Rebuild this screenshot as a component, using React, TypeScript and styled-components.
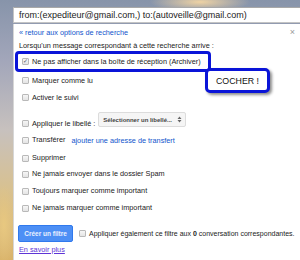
import styled, { createGlobalStyle } from "styled-components";

const GlobalStyle = createGlobalStyle`
  html, body {
    margin: 0;
    padding: 0;
    width: 300px;
    height: 260px;
    overflow: hidden;
  }
  body {
    font-family: "Liberation Sans", Arial, sans-serif;
  }
`;

const Page = styled.div`
  width: 300px;
  height: 260px;
  box-sizing: border-box;
  padding: 7px 0 0 13px;
  display: flex;
  flex-direction: column;
  background:
    radial-gradient(ellipse 50px 10px at 200px 2px, #efd3a4 0%, rgba(239, 211, 164, 0) 100%),
    radial-gradient(ellipse 12px 40px at 4px 225px, #e8c880 0%, rgba(232, 200, 128, 0) 100%),
    linear-gradient(180deg, #8794aa 0px, #a2a6ba 60px, #c7c1be 130px, #d8c190 190px, #d9b36a 260px);
`;

const SearchBox = styled.div`
  height: 16px;
  box-sizing: border-box;
  background: #fff;
  border: 1px solid #c4c4c4;
  border-top-color: #a8a8a8;
  border-right: none;
  padding-left: 5px;
  font-size: 9px;
  line-height: 14px;
  color: #222;
  white-space: nowrap;
  overflow: hidden;
`;

const Panel = styled.div`
  position: relative;
  flex: 1;
  margin-top: 1px;
  background: #fff;
  border-left: 1px solid #d6d6d6;
  padding-left: 5px;
  display: flex;
  flex-direction: column;
  font-size: 7.3px;
  color: #222;
`;

const BackLink = styled.a`
  height: 17px;
  line-height: 17px;
  color: #1155cc;
  text-decoration: none;
`;

const Close = styled.span`
  position: absolute;
  top: 3px;
  right: 5px;
  font-size: 9px;
  color: #999;
`;

const Intro = styled.div`
  height: 10px;
  line-height: 10px;
`;

const Highlight = styled.div`
  align-self: flex-start;
  margin-left: -4px;
  width: 196px;
  height: 21px;
  box-sizing: border-box;
  border: 3px solid #0a14d8;
  border-radius: 4px;
  padding-left: 4px;
  display: flex;
  align-items: center;
  gap: 3px;
  white-space: nowrap;
`;

const Callout = styled.div`
  position: absolute;
  left: 191px;
  top: 44px;
  width: 65px;
  height: 25px;
  box-sizing: border-box;
  border: 3px solid #0a14d8;
  border-radius: 5px;
  background: #fff;
  box-shadow: 2px 2px 3px rgba(0, 0, 0, 0.45);
  display: flex;
  align-items: center;
  justify-content: center;
  font-size: 8.8px;
  color: #111;
`;

const Row = styled.div<{ h: number; bottom?: boolean }>`
  height: ${(p) => p.h}px;
  display: flex;
  align-items: ${(p) => (p.bottom ? "flex-end" : "center")};
  gap: 3px;
  padding-left: 3px;
  white-space: nowrap;
`;

const Box = styled.span`
  width: 5px;
  height: 5px;
  flex: none;
  border: 1px solid #b9b9b9;
  border-radius: 1px;
  background: linear-gradient(180deg, #f6f6f6, #e4e4e4);
  color: #556;
  font-size: 6px;
  line-height: 5px;
  text-align: center;
  overflow: hidden;
`;

const Label = styled.span`
  line-height: 12px;
`;

const SelectBox = styled.div`
  margin-bottom: 3px;
  width: 88px;
  height: 15px;
  box-sizing: border-box;
  border: 1px solid #dcdcdc;
  border-radius: 2px;
  background: #f5f5f5;
  display: flex;
  align-items: center;
  justify-content: space-between;
  gap: 2px;
  padding: 0 3px 0 4px;
  font-size: 6px;
  font-weight: bold;
  color: #444;
`;

const ForwardLink = styled.a`
  margin-left: 3px;
  color: #1155cc;
  text-decoration: none;
`;

const Footer = styled.div`
  margin-top: 9px;
  margin-left: -1px;
  display: flex;
  align-items: center;
  gap: 6px;
  white-space: nowrap;
`;

const CreateButton = styled.button`
  width: 55px;
  height: 17px;
  border: 1px solid #3079ed;
  border-radius: 2px;
  background: #4d8ff5;
  color: #eaf1ff;
  font-family: inherit;
  font-size: 6.5px;
  font-weight: bold;
  padding: 0;
`;

const ApplyLabel = styled.span`
  font-size: 7px;
  margin-left: -3px;
`;

const LearnMore = styled.a`
  height: 16px;
  line-height: 16px;
  color: #5e35d6;
  text-decoration: underline;
`;

const rows: { label: string; h: number }[] = [
  { label: "Marquer comme lu", h: 17 },
  { label: "Activer le suivi", h: 17 },
];

const rowsAfter: { label: string; h: number }[] = [
  { label: "Supprimer", h: 16 },
  { label: "Ne jamais envoyer dans le dossier Spam", h: 16 },
  { label: "Toujours marquer comme important", h: 18 },
  { label: "Ne jamais marquer comme important", h: 16 },
];

const UpDown = () => (
  <svg width="5" height="7" viewBox="0 0 5 7">
    <path d="M0.5 3 L2.5 0.5 L4.5 3 Z M0.5 4 L2.5 6.5 L4.5 4 Z" fill="#666" />
  </svg>
);

export default function App() {
  return (
    <>
      <GlobalStyle />
      <Page>
        <SearchBox>from:(expediteur@gmail.com,) to:(autoveille@gmail.com)</SearchBox>
        <Panel>
          <BackLink>« retour aux options de recherche</BackLink>
          <Close>×</Close>
          <Intro>Lorsqu'un message correspondant à cette recherche arrive :</Intro>
          <Highlight>
            <Box>✓</Box>
            <Label>Ne pas afficher dans la boîte de réception (Archiver)</Label>
          </Highlight>
          {rows.map((r) => (
            <Row key={r.label} h={r.h}>
              <Box />
              <Label>{r.label}</Label>
            </Row>
          ))}
          <Row h={24} bottom>
            <Box style={{ marginBottom: 3 }} />
            <Label>Appliquer le libellé :</Label>
            <SelectBox>
              <span>Sélectionner un libellé...</span>
              <UpDown />
            </SelectBox>
          </Row>
          <Row h={20}>
            <Box />
            <Label>Transférer</Label>
            <ForwardLink>ajouter une adresse de transfert</ForwardLink>
          </Row>
          {rowsAfter.map((r) => (
            <Row key={r.label} h={r.h}>
              <Box />
              <Label>{r.label}</Label>
            </Row>
          ))}
          <Footer>
            <CreateButton>Créer un filtre</CreateButton>
            <Box />
            <ApplyLabel>
              Appliquer également ce filtre aux <b>0</b> conversation correspondantes.
            </ApplyLabel>
          </Footer>
          <LearnMore>En savoir plus</LearnMore>
          <Callout>COCHER !</Callout>
        </Panel>
      </Page>
    </>
  );
}
